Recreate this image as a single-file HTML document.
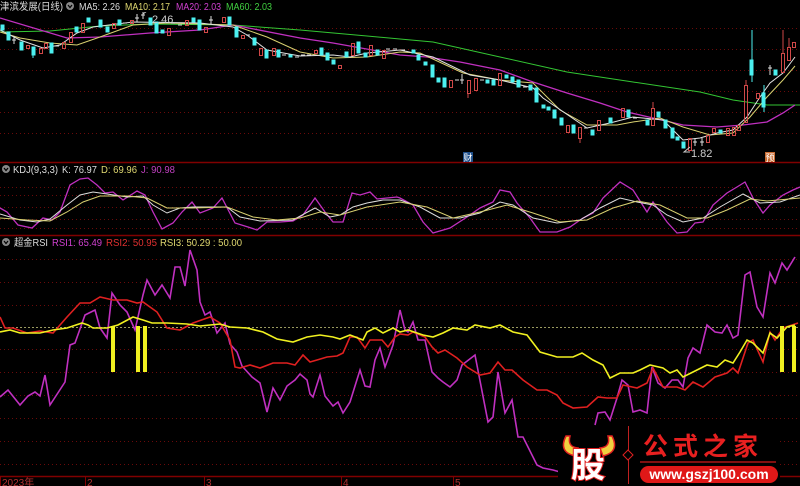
<!DOCTYPE html>
<html><head><meta charset="utf-8"><style>
html,body{margin:0;padding:0;background:#000;width:800px;height:486px;overflow:hidden}
svg{display:block}
text{font-family:"Liberation Sans","Noto Sans CJK SC",sans-serif}
</style></head><body>
<svg width="800" height="486" viewBox="0 0 800 486" xmlns="http://www.w3.org/2000/svg">
<rect width="800" height="486" fill="#000"/>
<g stroke="#6a0a0a" stroke-dasharray="1,3" stroke-width="1">
<line x1="0" y1="28.5" x2="800" y2="28.5"/><line x1="0" y1="49.5" x2="800" y2="49.5"/><line x1="0" y1="70.5" x2="800" y2="70.5"/><line x1="0" y1="91.5" x2="800" y2="91.5"/><line x1="0" y1="112.5" x2="800" y2="112.5"/><line x1="0" y1="133.5" x2="800" y2="133.5"/>
<line x1="0" y1="187.5" x2="800" y2="187.5"/><line x1="0" y1="195.5" x2="800" y2="195.5"/><line x1="0" y1="207.5" x2="800" y2="207.5"/><line x1="0" y1="219.5" x2="800" y2="219.5"/><line x1="0" y1="228.5" x2="800" y2="228.5"/>
<line x1="0" y1="259.5" x2="800" y2="259.5"/><line x1="0" y1="282.5" x2="800" y2="282.5"/><line x1="0" y1="305.5" x2="800" y2="305.5"/><line x1="0" y1="349.5" x2="800" y2="349.5"/><line x1="0" y1="372.5" x2="800" y2="372.5"/><line x1="0" y1="395.5" x2="800" y2="395.5"/><line x1="0" y1="418.5" x2="800" y2="418.5"/><line x1="0" y1="441.5" x2="800" y2="441.5"/><line x1="0" y1="464.5" x2="800" y2="464.5"/>
</g>
<line x1="0" y1="327.5" x2="800" y2="327.5" stroke="#9a9a60" stroke-dasharray="2,2"/>
<g stroke="#800000" stroke-width="1.5">
<line x1="0" y1="162.5" x2="800" y2="162.5"/><line x1="0" y1="235.5" x2="800" y2="235.5"/><line x1="0" y1="476.5" x2="800" y2="476.5"/>
</g>
<!-- MAs -->
<g fill="none" stroke-width="1">
<polyline stroke="#33c533" points="0,32 50,31 100,26 150,24 233,25 300,30 367,36 400,39 433,42 500,57 567,72 633,82 700,92 733,100 767,105 800,105"/>
<polyline stroke="#c030c0" stroke-width="1.3" points="0,18 67,38 100,37 150,33 200,30 233,25 300,38 333,43 400,55 427,57 460,62 500,70 533,82 567,93 600,103 627,112 653,118 683,125 717,127 743,125 767,122 783,113 795,105"/>
<polyline stroke="#d8d070" points="0,32 20,38 50,43 77,45 100,37 133,25 167,23 233,25 267,37 300,52 333,58 367,57 400,52 420,53 463,73 500,80 533,83 560,110 587,125 617,125 633,122 660,118 683,127 710,135 733,133 750,117 767,97 783,80 795,66"/>
<polyline stroke="#e0e0e0" points="0,30 20,40 43,48 60,45 77,33 93,27 133,22 200,23 233,27 247,35 267,50 300,56 333,55 350,57 367,53 400,50 433,57 470,75 500,80 533,88 543,98 587,128 610,123 633,117 663,120 683,140 700,138 717,133 733,130 747,117 760,97 770,83 783,73 795,57"/>
</g>
<!-- candles -->
<g fill="#4cf0f0" stroke="#4cf0f0">
<rect x="1" y="25" width="3" height="5"/><rect x="7" y="32" width="3" height="8"/><rect x="20" y="42" width="3" height="8"/><rect x="32" y="47" width="3" height="8"/><rect x="50" y="43" width="3" height="10"/><rect x="75" y="27" width="3" height="5"/><rect x="87" y="18" width="3" height="4"/><rect x="99" y="20" width="3" height="7"/><rect x="106" y="27" width="3" height="5"/><rect x="118" y="20" width="3" height="5"/><rect x="149" y="18" width="3" height="7"/><rect x="155" y="22" width="3" height="11"/><rect x="161" y="30" width="3" height="3"/><rect x="192" y="18" width="3" height="4"/><rect x="198" y="20" width="3" height="10"/><rect x="228" y="17" width="3" height="8"/><rect x="235" y="27" width="3" height="10"/><rect x="253" y="38" width="3" height="7"/><rect x="265" y="50" width="3" height="8"/><rect x="277" y="50" width="3" height="7"/><rect x="289" y="55" width="3" height="2"/><rect x="320" y="48" width="3" height="7"/><rect x="326" y="53" width="3" height="7"/><rect x="332" y="60" width="3" height="4"/><rect x="345" y="52" width="3" height="5"/><rect x="357" y="42" width="3" height="11"/><rect x="364" y="53" width="3" height="4"/><rect x="376" y="50" width="3" height="5"/>
<rect x="412" y="50" width="3" height="3"/><rect x="417" y="55" width="3" height="5"/><rect x="424" y="62" width="3" height="3"/><rect x="431" y="65" width="3" height="12"/><rect x="437" y="78" width="3" height="4"/><rect x="443" y="78" width="3" height="9"/><rect x="486" y="80" width="3" height="3"/><rect x="492" y="80" width="3" height="5"/><rect x="505" y="75" width="3" height="3"/><rect x="511" y="77" width="3" height="5"/><rect x="517" y="80" width="3" height="7"/><rect x="529" y="85" width="3" height="5"/><rect x="535" y="88" width="3" height="14"/><rect x="542" y="105" width="3" height="3"/><rect x="547" y="107" width="3" height="3"/><rect x="553" y="110" width="3" height="8"/><rect x="560" y="118" width="3" height="7"/><rect x="572" y="125" width="3" height="8"/><rect x="591" y="130" width="3" height="5"/><rect x="609" y="118" width="3" height="5"/><rect x="627" y="110" width="3" height="7"/><rect x="646" y="120" width="3" height="5"/><rect x="657" y="112" width="3" height="5"/><rect x="664" y="120" width="3" height="8"/><rect x="671" y="128" width="3" height="10"/><rect x="676" y="137" width="3" height="3"/><rect x="682" y="142" width="3" height="6"/><rect x="719" y="130" width="3" height="3"/><rect x="750" y="60" width="3" height="15"/><rect x="762" y="93" width="3" height="14"/><rect x="774" y="70" width="3" height="5"/>
</g>
<g fill="none" stroke="#d04848">
<rect x="26.5" y="45.5" width="3" height="3"/><rect x="39.5" y="48.5" width="3" height="5"/><rect x="44.5" y="43.5" width="3" height="5"/><rect x="62.5" y="42.5" width="3" height="6"/><rect x="69.5" y="32.5" width="3" height="10"/><rect x="81.5" y="23.5" width="3" height="9"/><rect x="112.5" y="23.5" width="3" height="5"/><rect x="130.5" y="20.5" width="3" height="3"/><rect x="167.5" y="28.5" width="3" height="7"/><rect x="185.5" y="20.5" width="3" height="5"/><rect x="204.5" y="27.5" width="3" height="5"/><rect x="222.5" y="17.5" width="3" height="5"/><rect x="241.5" y="35.5" width="3" height="3"/><rect x="259.5" y="48.5" width="3" height="7"/><rect x="272.5" y="48.5" width="3" height="7"/><rect x="314.5" y="50.5" width="3" height="3"/><rect x="338.5" y="65.5" width="3" height="3"/><rect x="351.5" y="43.5" width="3" height="12"/><rect x="369.5" y="45.5" width="3" height="10"/><rect x="382.5" y="50.5" width="3" height="8"/>
<rect x="449.5" y="80.5" width="3" height="7"/><rect x="467.5" y="80.5" width="3" height="13"/><rect x="474.5" y="78.5" width="3" height="12"/><rect x="498.5" y="73.5" width="3" height="12"/><rect x="566.5" y="125.5" width="3" height="7"/><rect x="578.5" y="127.5" width="3" height="11"/><rect x="597.5" y="120.5" width="3" height="10"/><rect x="621.5" y="108.5" width="3" height="9"/><rect x="651.5" y="108.5" width="3" height="17"/><rect x="688.5" y="138.5" width="3" height="12"/><rect x="706.5" y="135.5" width="3" height="7"/><rect x="712.5" y="128.5" width="3" height="4"/><rect x="726.5" y="128.5" width="3" height="7"/><rect x="732.5" y="127.5" width="3" height="8"/><rect x="737.5" y="125.5" width="3" height="5"/><rect x="744.5" y="85.5" width="3" height="37"/><rect x="756.5" y="93.5" width="3" height="5"/><rect x="781.5" y="53.5" width="3" height="19"/><rect x="787.5" y="47.5" width="3" height="13"/><rect x="792.5" y="42.5" width="3" height="5"/>
</g>
<g stroke="#d04848"><line x1="783" y1="30" x2="783" y2="54"/><line x1="789" y1="38" x2="789" y2="48"/><line x1="746" y1="80" x2="746" y2="86"/><line x1="653" y1="102" x2="653" y2="108"/><line x1="468" y1="93" x2="468" y2="98"/><line x1="580" y1="138" x2="580" y2="143"/></g>
<g stroke="#4cf0f0"><line x1="752" y1="30" x2="752" y2="60"/><line x1="752" y1="75" x2="752" y2="82"/><line x1="764" y1="85" x2="764" y2="112"/><line x1="33" y1="55" x2="33" y2="58"/></g>
<g stroke="#ddd"><line x1="12" y1="40" x2="16" y2="40"/><line x1="14" y1="36" x2="14" y2="44"/><line x1="55" y1="46" x2="59" y2="46"/><line x1="123" y1="23" x2="127" y2="23"/><line x1="135" y1="18" x2="139" y2="18"/><line x1="137" y1="14" x2="137" y2="22"/><line x1="141" y1="15" x2="145" y2="15"/><line x1="143" y1="11" x2="143" y2="19"/><line x1="171" y1="23" x2="175" y2="23"/><line x1="178" y1="25" x2="182" y2="25"/><line x1="209" y1="20" x2="213" y2="20"/><line x1="211" y1="16" x2="211" y2="24"/><line x1="246" y1="35" x2="250" y2="35"/><line x1="282" y1="55" x2="286" y2="55"/><line x1="295" y1="57" x2="299" y2="57"/><line x1="301" y1="55" x2="305" y2="55"/><line x1="307" y1="55" x2="311" y2="55"/><line x1="386" y1="49" x2="390" y2="49"/><line x1="393" y1="49" x2="397" y2="49"/><line x1="401" y1="50" x2="405" y2="50"/><line x1="455" y1="80" x2="459" y2="80"/><line x1="460" y1="80" x2="464" y2="80"/><line x1="462" y1="74" x2="462" y2="84"/><line x1="480" y1="80" x2="484" y2="80"/><line x1="523" y1="87" x2="527" y2="87"/><line x1="584" y1="128" x2="588" y2="128"/><line x1="633" y1="118" x2="637" y2="118"/><line x1="693" y1="142" x2="697" y2="142"/><line x1="695" y1="138" x2="695" y2="146"/><line x1="700" y1="142" x2="704" y2="142"/><line x1="702" y1="138" x2="702" y2="146"/><line x1="770" y1="65" x2="770" y2="75"/><line x1="768" y1="68" x2="772" y2="68"/></g>
<g stroke="#ccc" fill="none"><polyline points="143,14 147,11 152,11"/><polyline points="690,147 684,152 690,152"/></g>
<text x="152" y="23" fill="#ccc" font-size="11">2.46</text>
<text x="691" y="157" fill="#ccc" font-size="11">1.82</text>
<rect x="463" y="152" width="10" height="10" fill="#1f4f8a"/><text x="463.5" y="161" fill="#fff" font-size="9">财</text>
<rect x="765" y="152" width="10" height="10" fill="#c86a30"/><text x="765.5" y="161" fill="#fff" font-size="9">预</text>
<!-- headers -->
<g font-size="10">
<rect x="0" y="0" width="280" height="12" fill="#000"/>
<text x="0" y="10" fill="#ddd" textLength="63" lengthAdjust="spacingAndGlyphs">津滨发展(日线)</text>
<circle cx="70" cy="6" r="4" fill="#888"/><path d="M68,5 L70,7.5 L72,5" stroke="#000" fill="none" stroke-width="1.2"/>
<text x="79" y="10" fill="#ddd" textLength="41" lengthAdjust="spacingAndGlyphs">MA5: 2.26</text><text x="125" y="10" fill="#e0d870" textLength="45" lengthAdjust="spacingAndGlyphs">MA10: 2.17</text><text x="176" y="10" fill="#d040d0" textLength="45" lengthAdjust="spacingAndGlyphs">MA20: 2.03</text><text x="226" y="10" fill="#40d040" textLength="46" lengthAdjust="spacingAndGlyphs">MA60: 2.03</text>
<circle cx="6" cy="169" r="4" fill="#888"/><path d="M4,168 L6,170.5 L8,168" stroke="#000" fill="none" stroke-width="1.2"/>
<text x="13" y="173" fill="#ddd" textLength="45" lengthAdjust="spacingAndGlyphs">KDJ(9,3,3)</text><text x="62" y="173" fill="#ddd" textLength="35" lengthAdjust="spacingAndGlyphs">K: 76.97</text><text x="101" y="173" fill="#e0d870" textLength="36" lengthAdjust="spacingAndGlyphs">D: 69.96</text><text x="141" y="173" fill="#c040c0" textLength="34" lengthAdjust="spacingAndGlyphs">J: 90.98</text>
<circle cx="6" cy="242" r="4" fill="#888"/><path d="M4,241 L6,243.5 L8,241" stroke="#000" fill="none" stroke-width="1.2"/>
<text x="14" y="246" fill="#ddd" textLength="34" lengthAdjust="spacingAndGlyphs">超金RSI</text><text x="52" y="246" fill="#d040d0" textLength="50" lengthAdjust="spacingAndGlyphs">RSI1: 65.49</text><text x="106" y="246" fill="#e03030" textLength="51" lengthAdjust="spacingAndGlyphs">RSI2: 50.95</text><text x="160" y="246" fill="#e0d870" textLength="82" lengthAdjust="spacingAndGlyphs">RSI3: 50.29 : 50.00</text>
</g>
<!-- KDJ -->
<g fill="none">
<polyline stroke="#c030c0" stroke-width="1.3" points="0,208 7,212 18,225 32,228 43,218 52,220 60,212 70,185 80,179 88,178 97,185 105,193 113,192 123,200 137,191 145,195 153,212 162,229 173,223 182,212 192,202 200,213 213,208 222,198 235,223 248,227 257,230 267,222 280,222 293,221 303,215 315,198 325,212 333,222 343,222 352,193 360,195 370,192 377,199 387,198 397,197 400,198 413,205 423,222 433,233 450,228 467,217 480,208 493,202 500,190 510,192 517,203 530,218 540,232 557,232 570,227 583,218 593,213 603,198 620,182 633,190 647,212 653,202 667,222 677,233 687,232 695,223 703,222 713,205 727,193 737,187 745,182 753,198 763,213 770,205 783,195 793,190 800,187"/>
<polyline stroke="#ddd" points="0,214 20,220 37,222 50,219 67,205 80,195 93,192 107,194 127,197 143,196 153,205 167,213 180,208 193,207 213,207 227,207 240,217 260,221 293,220 315,208 330,217 340,215 353,207 367,203 383,200 400,200 420,207 440,218 460,218 480,213 500,202 513,205 533,218 557,223 580,220 600,208 620,198 637,202 653,205 667,215 683,222 703,218 720,207 743,194 760,203 780,202 800,195"/>
<polyline stroke="#d8d070" points="0,218 27,220 50,221 67,212 83,202 100,196 127,196 147,198 167,208 193,208 227,207 253,217 277,220 300,218 320,212 340,215 367,207 400,202 427,207 453,218 480,212 507,205 533,213 560,222 587,220 613,208 637,201 660,205 687,218 707,218 727,210 750,199 767,201 800,198"/>
</g>
<!-- RSI -->
<g fill="none" stroke-width="1.6">
<polyline stroke="#c030c0" points="0,397 8,390 20,405 28,396 35,392 40,396 45,375 50,405 65,382 70,345 75,343 85,315 95,310 100,328 107,338 112,293 120,305 127,312 135,330 143,295 147,280 155,295 162,285 170,298 175,267 180,267 185,286 190,250 197,270 200,302 205,315 210,312 217,333 225,323 230,344 237,352 242,366 252,377 260,383 267,412 273,388 280,400 287,386 295,380 300,374 307,380 310,394 313,397 320,375 325,396 333,406 338,402 343,413 350,402 355,386 360,370 365,386 370,387 375,360 380,348 385,367 393,345 400,310 405,330 408,332 413,322 418,340 425,340 432,372 438,378 443,382 450,387 457,380 462,365 475,355 488,422 493,417 498,372 505,413 512,400 518,437 523,437 537,465 543,468 553,470 560,472"/>
<polyline stroke="#c030c0" points="595,425 598,413 605,412 610,420 617,398 622,380 628,385 633,412 640,410 647,413 652,367 658,383 665,388 672,380 678,380 683,387 688,358 693,348 700,353 707,325 715,332 722,333 727,325 733,338 738,335 745,275 750,272 757,307 763,317 770,273 775,283 782,263 787,270 795,257"/>
<polyline stroke="#e02020" points="0,317 5,328 13,328 27,333 40,331 53,333 67,317 80,303 90,303 100,297 113,300 127,300 137,303 143,302 157,312 167,328 180,330 193,323 210,317 220,323 230,340 235,367 240,368 250,365 260,368 273,363 287,363 295,365 303,355 310,362 317,360 327,357 337,356 343,353 350,337 357,337 365,348 370,340 382,340 388,347 395,337 400,334 408,335 413,332 425,337 432,347 438,353 445,350 457,358 467,367 480,375 490,373 498,362 505,370 512,370 523,380 537,390 547,390 557,395 563,403 573,408 587,407 598,397 607,398 617,398 623,385 637,388 647,383 653,368 663,387 677,387 685,390 693,382 703,387 715,377 727,373 733,368 738,373 748,343 753,340 763,362 770,332 775,340 783,328 792,325 798,323"/>
<polyline stroke="#f0f020" points="0,332 10,330 20,333 40,333 53,330 67,328 82,323 88,325 93,328 107,328 118,325 133,317 143,320 152,323 167,323 187,324 200,326 220,324 230,327 247,328 263,332 277,339 293,342 307,337 320,335 333,337 340,339 350,335 363,340 367,332 375,328 383,333 393,328 400,332 408,330 423,335 433,337 443,333 453,328 467,330 475,325 490,328 500,325 513,332 527,335 540,352 557,357 573,357 582,353 593,360 603,365 610,378 620,373 633,373 640,370 650,365 663,368 670,373 677,370 683,377 693,372 707,365 717,367 725,360 733,363 740,352 747,340 753,343 763,353 770,333 777,338 787,327 795,325"/>
</g>
<g fill="#f0f020"><rect x="111" y="326" width="4" height="46"/><rect x="136" y="326" width="4" height="46"/><rect x="143" y="326" width="4" height="46"/><rect x="780" y="326" width="4" height="46"/><rect x="792" y="326" width="4" height="46"/></g>
<!-- axis -->
<g stroke="#800000"><line x1="0.5" y1="476" x2="0.5" y2="486"/><line x1="85.5" y1="476" x2="85.5" y2="486"/><line x1="204.5" y1="476" x2="204.5" y2="486"/><line x1="341.5" y1="476" x2="341.5" y2="486"/><line x1="453.5" y1="476" x2="453.5" y2="486"/></g>
<g font-size="10" fill="#b03030"><text x="2" y="486">2023年</text><text x="87" y="486">2</text><text x="206" y="486">3</text><text x="343" y="486">4</text><text x="455" y="486">5</text></g>
<!-- logo -->
<rect x="558" y="428" width="222" height="58" fill="#000"/>
<path d="M566,436 Q558,452 575,456 L578,448 Q567,447 570,436 Z" fill="#f0d040" stroke="#e02020" stroke-width="1.5"/>
<path d="M612,436 Q620,452 603,456 L600,448 Q611,447 608,436 Z" fill="#f0d040" stroke="#e02020" stroke-width="1.5"/>
<text x="571" y="477" font-size="34" font-weight="bold" fill="#fff" stroke="#e02020" stroke-width="2" paint-order="stroke" font-family="Noto Sans CJK SC,sans-serif">股</text>
<line x1="628.5" y1="426" x2="628.5" y2="484" stroke="#c02020"/>
<path d="M628,450 L633,455 L628,460 L623,455 Z" fill="#000" stroke="#e02020"/>
<text x="643" y="455" font-size="25" font-weight="bold" fill="#e82020" letter-spacing="5" font-family="Noto Serif CJK SC,Noto Sans CJK SC,serif">公式之家</text>
<line x1="640" y1="462" x2="776" y2="462" stroke="#801010" stroke-width="2"/>
<rect x="640" y="466" width="138" height="17" rx="8.5" fill="#e01818"/>
<text x="709" y="479" font-size="14" font-weight="bold" fill="#fff" text-anchor="middle">www.gszj100.com</text>
</svg>
</body></html>
